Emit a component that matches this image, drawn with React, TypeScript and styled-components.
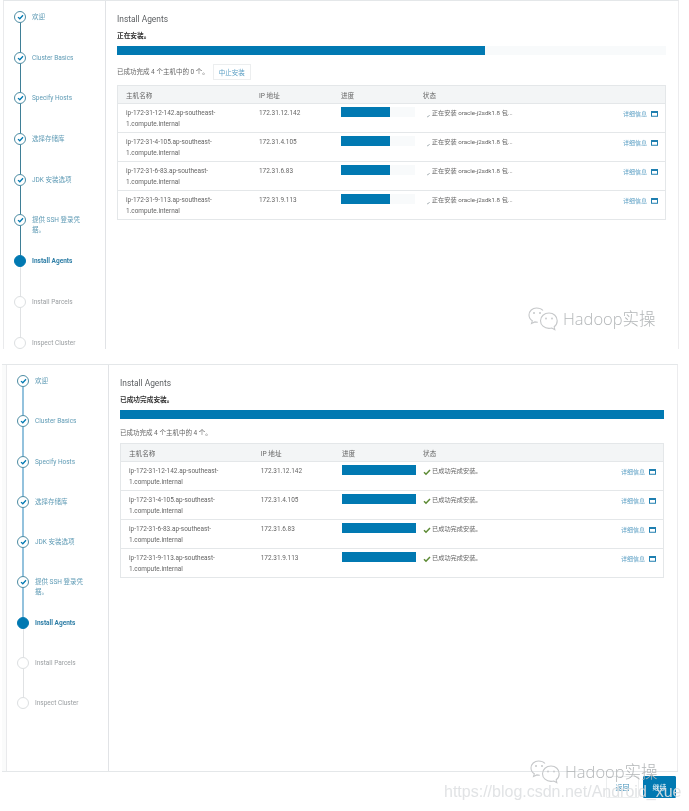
import styled, { createGlobalStyle } from 'styled-components';

const blue = '#0179b2';
const lineGrey = '#e4e7e9';

const hosts = [
  { name: 'ip-172-31-12-142.ap-southeast-1.compute.internal', ip: '172.31.12.142' },
  { name: 'ip-172-31-4-105.ap-southeast-1.compute.internal', ip: '172.31.4.105' },
  { name: 'ip-172-31-6-83.ap-southeast-1.compute.internal', ip: '172.31.6.83' },
  { name: 'ip-172-31-9-113.ap-southeast-1.compute.internal', ip: '172.31.9.113' },
];

type StepState = 'done' | 'active' | 'pending';

const steps: { label: string; state: StepState }[] = [
  { label: '欢迎', state: 'done' },
  { label: 'Cluster Basics', state: 'done' },
  { label: 'Specify Hosts', state: 'done' },
  { label: '选择存储库', state: 'done' },
  { label: 'JDK 安装选项', state: 'done' },
  { label: '提供 SSH 登录凭据。', state: 'done' },
  { label: 'Install Agents', state: 'active' },
  { label: 'Install Parcels', state: 'pending' },
  { label: 'Inspect Cluster', state: 'pending' },
];

const GlobalStyle = createGlobalStyle`
  html, body {
    margin: 0;
    padding: 0;
    background: #fff;
  }
  body {
    font-family: Roboto, 'Noto Sans CJK SC', sans-serif;
    color: #555;
  }
`;

const Page = styled.div`
  position: relative;
  width: 689px;
  height: 811px;
  overflow: hidden;
  background: #fff;
  filter: blur(0.45px);
`;

const Wizard = styled.section<{ $height: number; $gutter: number; $top: number }>`
  display: flex;
  width: 676px;
  height: ${(p) => p.$height}px;
  margin: ${(p) => p.$top}px 0 0 ${(p) => (p.$gutter ? 2 : 3)}px;
  padding-left: ${(p) => p.$gutter}px;
  box-sizing: border-box;
  overflow: hidden;
  background: ${(p) => (p.$gutter ? '#fafbfb' : '#fff')};
  border-top: 1px solid ${lineGrey};
  border-right: 1px solid #ececee;
`;

const Sidebar = styled.nav`
  flex: 0 0 103px;
  box-sizing: border-box;
  padding: 10px 0 0 10px;
  background: #fff;
  border-left: 1px solid #e9eaec;
  border-right: 1px solid #e1e3e6;
`;

const Step = styled.div<{ $height: number }>`
  display: flex;
  gap: 6px;
  height: ${(p) => p.$height}px;
`;

const Rail = styled.div`
  display: flex;
  flex: 0 0 12px;
  flex-direction: column;
  align-items: center;
`;

const Node = styled.span<{ $state: StepState }>`
  display: flex;
  flex: 0 0 12px;
  align-items: center;
  justify-content: center;
  box-sizing: border-box;
  width: 12px;
  border-radius: 50%;
  border: 1px solid
    ${(p) => (p.$state === 'done' ? '#4d8ca3' : p.$state === 'active' ? blue : '#dcdfe1')};
  background: ${(p) => (p.$state === 'active' ? blue : '#fff')};
`;

const RailLine = styled.span<{ $color: string; $width: number }>`
  flex: 1;
  width: ${(p) => p.$width}px;
  background: ${(p) => p.$color};
`;

const StepLabel = styled.span<{ $state: StepState }>`
  width: 54px;
  margin-top: 1px;
  font-size: 6.5px;
  line-height: 10px;
  font-weight: ${(p) => (p.$state === 'active' ? 700 : 400)};
  color: ${(p) =>
    p.$state === 'done' ? '#5f9bb5' : p.$state === 'active' ? '#2e7ea6' : '#9a9ea1'};
  white-space: ${(p) => (p.$state === 'done' ? 'normal' : 'nowrap')};
`;

const Main = styled.main<{ $right: number }>`
  flex: 1;
  min-width: 0;
  box-sizing: border-box;
  padding: 13px ${(p) => p.$right}px 0 11px;
  background: #fff;
`;

const Title = styled.h1`
  margin: 0;
  font-size: 8.4px;
  line-height: 11px;
  font-weight: 400;
  color: #5c5f62;
`;

const StatusText = styled.p`
  margin: 6px 0 0;
  font-size: 6.7px;
  line-height: 10px;
  font-weight: 700;
  color: #333;
`;

const Bar = styled.div<{ $height: number }>`
  height: ${(p) => p.$height}px;
  background: #f8fafb;
`;

const BarFill = styled.div`
  height: 100%;
  background: ${blue};
`;

const OverallBar = styled(Bar)`
  margin-top: 5px;
`;

const Summary = styled.div`
  display: flex;
  align-items: center;
  gap: 4px;
  margin: 9px 0 5px;
  font-size: 6.5px;
  line-height: 10px;
  color: #666;
`;

const AbortButton = styled.button`
  width: 38px;
  height: 16px;
  padding: 0;
  border: 1px solid #eceeef;
  background: #fff;
  font-family: inherit;
  font-size: 6.5px;
  color: #5b9fc4;
`;

const Table = styled.div`
  border: 1px solid ${lineGrey};
  border-bottom-width: 0;
`;

const columns = 'grid-template-columns: 25% 15.4% 15.4% 1fr;';

const HeaderRow = styled.div`
  display: grid;
  ${columns}
  align-items: center;
  box-sizing: border-box;
  height: 18px;
  padding: 0 7px 0 8px;
  background: #f3f5f6;
  border-bottom: 1px solid ${lineGrey};
  font-size: 6.6px;
  color: #666;
`;

const Row = styled.div`
  display: grid;
  ${columns}
  box-sizing: border-box;
  height: 29px;
  padding: 3px 7px 0 8px;
  border-bottom: 1px solid ${lineGrey};
  font-size: 6.45px;
  line-height: 11px;
  color: #666;
`;

const HostCell = styled.div`
  padding: 1px 6px 0 0;
`;

const IpCell = styled.div`
  padding-top: 1px;
`;

const RowBar = styled(Bar)`
  width: 91%;
`;

const StateCell = styled.div`
  display: flex;
  align-items: flex-start;
  justify-content: space-between;
  padding-top: 1px;
`;

const StateText = styled.span`
  display: flex;
  align-items: center;
  gap: 1px;
  font-size: 6.2px;
  color: #666;
`;

const StateIcon = styled.svg`
  flex: none;
  width: 8px;
  height: 8px;
`;

const DetailLink = styled.a`
  display: flex;
  align-items: center;
  gap: 4px;
  font-size: 6px;
  color: #5b9fc4;
`;

const WindowIcon = styled.svg`
  width: 7px;
  height: 6px;
`;

const Footer = styled.footer`
  display: flex;
  justify-content: flex-end;
  gap: 4px;
  width: 676px;
  height: 40px;
  margin-left: 2px;
  box-sizing: border-box;
  padding: 4px 2px 0 0;
  border-top: 1px solid ${lineGrey};
`;

const FooterButton = styled.button<{ $primary?: boolean }>`
  width: 33px;
  height: 22px;
  padding: 0;
  border: 1px solid ${(p) => (p.$primary ? blue : '#eceeef')};
  border-radius: 1px;
  background: ${(p) => (p.$primary ? blue : '#fff')};
  color: ${(p) => (p.$primary ? '#fff' : '#3f8fb8')};
  font-family: inherit;
  font-size: 7px;
`;

const Watermark = styled.div<{ $x: number; $y: number }>`
  position: absolute;
  left: ${(p) => p.$x}px;
  top: ${(p) => p.$y}px;
  display: flex;
  align-items: center;
  gap: 4px;
  font-family: 'Open Sans', 'Noto Sans CJK SC', sans-serif;
  font-size: 16.5px;
  font-weight: 300;
  line-height: 24px;
  color: #b4b7b9;
`;

const BubbleIcon = styled.svg`
  width: 31px;
  height: 24px;
`;

const BlogUrl = styled.div`
  position: absolute;
  left: 444px;
  top: 782px;
  font-family: 'Liberation Sans', Arial, sans-serif;
  font-size: 16px;
  line-height: 20px;
  white-space: nowrap;
  color: rgba(222, 224, 226, 0.9);
`;

function Check() {
  return (
    <svg width="7" height="6" viewBox="0 0 7 6" aria-hidden="true">
      <path d="M1 3.1 2.8 4.8 6 1.2" fill="none" stroke={blue} strokeWidth="1.3" />
    </svg>
  );
}

function StepList({ height, doneLine, lineWidth }: { height: number; doneLine: string; lineWidth: number }) {
  return (
    <Sidebar>
      {steps.map((step, i) => (
        <Step key={step.label} $height={height}>
          <Rail>
            <Node $state={step.state}>{step.state === 'done' && <Check />}</Node>
            {i < steps.length - 1 && (
              <RailLine
                $color={step.state === 'done' ? doneLine : '#e0e2e4'}
                $width={step.state === 'done' ? lineWidth : 1}
              />
            )}
          </Rail>
          <StepLabel $state={step.state}>{step.label}</StepLabel>
        </Step>
      ))}
    </Sidebar>
  );
}

function HostTable({ installing }: { installing: boolean }) {
  return (
    <Table>
      <HeaderRow>
        <span>主机名称</span>
        <span>IP 地址</span>
        <span>进度</span>
        <span>状态</span>
      </HeaderRow>
      {hosts.map((host) => (
        <Row key={host.ip}>
          <HostCell>{host.name}</HostCell>
          <IpCell>{host.ip}</IpCell>
          <RowBar $height={10}>
            <BarFill style={{ width: installing ? '66%' : '100%' }} />
          </RowBar>
          <StateCell>
            <StateText>
              {installing ? (
                <StateIcon viewBox="0 0 8 8">
                  <path d="M4 6.800C5 6.800 6 6.200 6.600 5" fill="none" stroke="#8f9aa1" strokeWidth="0.8" />
                </StateIcon>
              ) : (
                <StateIcon viewBox="0 0 8 8">
                  <path d="M1 4.200 3 6.200 7 2" fill="none" stroke="#5c8a34" strokeWidth="1.5" />
                </StateIcon>
              )}
              {installing ? '正在安装 oracle-j2sdk1.8 包...' : '已成功完成安装。'}
            </StateText>
            <DetailLink>
              详细信息
              <WindowIcon viewBox="0 0 7 6">
                <rect x="0.5" y="0.75" width="6" height="4.5" fill="none" stroke="#1f7fb0" />
                <rect x="0" y="0" width="7" height="2" fill="#1f7fb0" />
              </WindowIcon>
            </DetailLink>
          </StateCell>
        </Row>
      ))}
    </Table>
  );
}

function HadoopMark({ x, y }: { x: number; y: number }) {
  return (
    <Watermark $x={x} $y={y}>
      <BubbleIcon viewBox="0 0 31 24">
        <g fill="none" stroke="#c6c8ca" strokeWidth="1.1">
          <path d="M15 3.500C13.500 1.800 11 1 8.500 1 4.500 1 1 4 1 8c0 2.500 1.300 4.500 3.300 5.800L3.500 16.500l3.300-1.600c1 .3 2 .4 3 .4" />
          <path d="M21 6c-4.700 0-8.500 3.400-8.500 7.700s3.800 7.700 8.500 7.700c1 0 1.900-.1 2.800-.4l3 1.600-.6-2.800c1.800-1.400 3-3.600 3-6.100C29.200 9.400 25.700 6 21 6z" />
        </g>
        <g fill="#c6c8ca">
          <circle cx="6" cy="6" r="1" />
          <circle cx="12" cy="6" r="1" />
          <circle cx="18" cy="11.500" r="0.9" />
          <circle cx="24" cy="11.500" r="0.9" />
        </g>
      </BubbleIcon>
      Hadoop实操
    </Watermark>
  );
}

export default function App() {
  return (
    <Page>
      <GlobalStyle />
      <Wizard $height={349} $gutter={0} $top={0}>
        <StepList height={40.7} doneLine="#3f7f96" lineWidth={1} />
        <Main $right={12}>
          <Title>Install Agents</Title>
          <StatusText>正在安装。</StatusText>
          <OverallBar $height={9}>
            <BarFill style={{ width: '67%' }} />
          </OverallBar>
          <Summary>
            已成功完成 4 个主机中的 0 个。
            <AbortButton>中止安装</AbortButton>
          </Summary>
          <HostTable installing />
        </Main>
      </Wizard>
      <Wizard $height={407} $gutter={4} $top={15}>
        <StepList height={40.3} doneLine="#93c2dd" lineWidth={2} />
        <Main $right={13}>
          <Title>Install Agents</Title>
          <StatusText>已成功完成安装。</StatusText>
          <OverallBar $height={9}>
            <BarFill style={{ width: '100%' }} />
          </OverallBar>
          <Summary>已成功完成 4 个主机中的 4 个。</Summary>
          <HostTable installing={false} />
        </Main>
      </Wizard>
      <Footer>
        <FooterButton>返回</FooterButton>
        <FooterButton $primary>继续</FooterButton>
      </Footer>
      <HadoopMark x={528} y={307} />
      <HadoopMark x={530} y={760} />
      <BlogUrl>https://blog.csdn.net/Android_xue</BlogUrl>
    </Page>
  );
}
